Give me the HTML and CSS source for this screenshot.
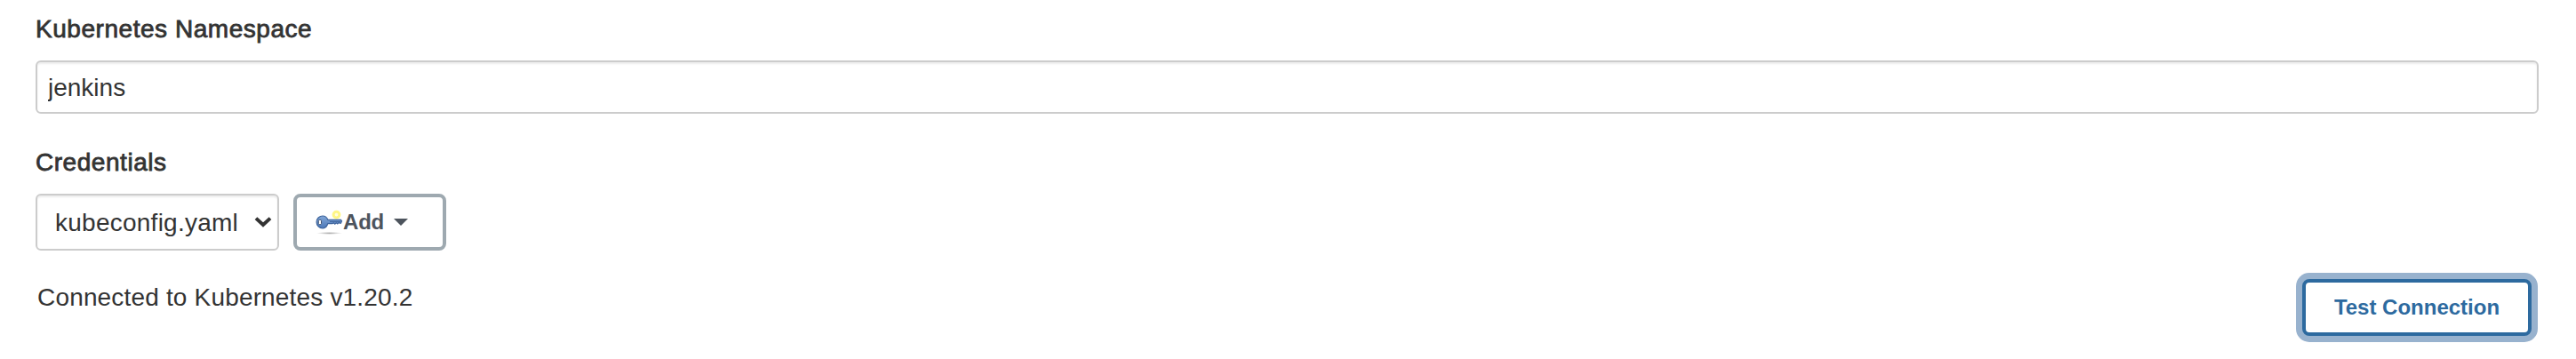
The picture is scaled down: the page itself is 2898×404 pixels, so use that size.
FILE: index.html
```html
<!DOCTYPE html>
<html lang="en">
<head>
<meta charset="utf-8">
<title>Kubernetes Cloud</title>
<link rel="stylesheet" href="styles.css">
</head>
<body>
<main class="form">
  <label class="label label-namespace" for="ns">Kubernetes Namespace</label>
  <input class="input" id="ns" type="text" value="jenkins">
  <div class="label label-credentials"><span>Credentials</span></div>
  <div class="row">
    <div class="select"><span class="select-text">kubeconfig.yaml</span>
      <svg class="chevron" width="20" height="14" viewBox="0 0 20 14"><path d="M2 2.600 10 10 18 2.600" fill="none" stroke="#333" stroke-width="4"/></svg>
    </div>
    <button class="add" type="button">
      <svg class="key" width="32" height="32" viewBox="0 0 32 32">
        <defs>
          <linearGradient id="blue" x1="0" y1="0" x2="0" y2="1"><stop offset="0" stop-color="#82a7d8"/><stop offset="1" stop-color="#4c78b8"/></linearGradient>
          <radialGradient id="shade"><stop offset="0" stop-color="#aaa"/><stop offset="1" stop-color="#aaa" stop-opacity="0"/></radialGradient>
        </defs>
        <ellipse cx="16.500" cy="28.400" rx="14.500" ry="1.500" fill="url(#shade)"/>
        <circle cx="24.500" cy="7.600" r="3.400" fill="#fffde0" stroke="#fff685" stroke-width="3"/>
        <path d="M9 9c3 0 4.800 1.400 5.800 4.300H29.500l1 1.500-1 2.400h-1.500l-1-.9-1.200 1.700-1.500-1.200-1.500 1.300-1.500-1.400-1.300 1h-5.200C13.800 21.200 11.800 22.800 9 22.800A6.900 6.900 0 0 1 9 9z" fill="url(#blue)" stroke="#3f659d" stroke-width="1.200"/>
        <path d="M17 15.500h12" stroke="#3f659d" stroke-width="1"/>
        <rect x="4.300" y="13.400" width="3.200" height="5.200" rx="1.200" fill="#fff" stroke="#3d506f" stroke-width="1"/>
      </svg><span class="add-text">Add</span><span class="caret"></span>
    </button>
  </div>
  <div class="footer">
    <span class="status">Connected to Kubernetes v1.20.2</span>
    <button class="test" type="button"><span>Test Connection</span></button>
  </div>
</main>
</body>
</html>
```
FILE: styles.css
```css
* { box-sizing: border-box; }
body { margin: 0; background: #fff; color: #333; font: 28px/32px "Liberation Sans", Arial, sans-serif; }
.form { display: flex; flex-direction: column; min-height: 404px; padding: 17px 42px 0 40px; }
.label { height: 32px; letter-spacing: 0.54px; -webkit-text-stroke: 0.8px #333; }
.label-credentials { margin-top: 39px; }
.input { width: 100%; height: 60px; margin-top: 19px; padding: 2px 12px 0; border: 2px solid #ccc; border-radius: 6px; background: #fff; box-shadow: inset 0 2px 2px rgba(0, 0, 0, 0.075); color: #333; font: inherit; outline: none; }
.row { display: flex; gap: 16px; margin-top: 19px; }
.select { display: flex; align-items: center; justify-content: space-between; width: 274px; height: 64px; padding: 0 6px 0 20px; border: 2px solid #ccc; border-radius: 6px; box-shadow: inset 0 2px 2px rgba(0, 0, 0, 0.075); }
.select-text { padding-top: 1px; letter-spacing: 0.25px; }
.add { display: flex; align-items: center; width: 172px; height: 64px; padding: 0 0 0 20px; border: 4px solid #9ea9b0; border-radius: 8px; background: #fff; color: #4d545d; font: bold 24px/28px "Liberation Sans", Arial, sans-serif; }
.key { flex: none; }
.add-text { letter-spacing: -0.2px; }
.caret { margin-left: 11px; border: 8px solid transparent; border-top-color: #4d545d; border-bottom: 0; }
.footer { display: flex; justify-content: space-between; padding: 32px 8px 0 2px; }
.status { margin-top: 5px; letter-spacing: 0.17px; }
.test { width: 258px; height: 64px; padding: 0; border: 4px solid #2d6a9f; border-radius: 8px; background: #fff; box-shadow: 0 0 0 7px #98b2ce; color: #2d6a9f; font: bold 24px/28px "Liberation Sans", Arial, sans-serif; }
```
